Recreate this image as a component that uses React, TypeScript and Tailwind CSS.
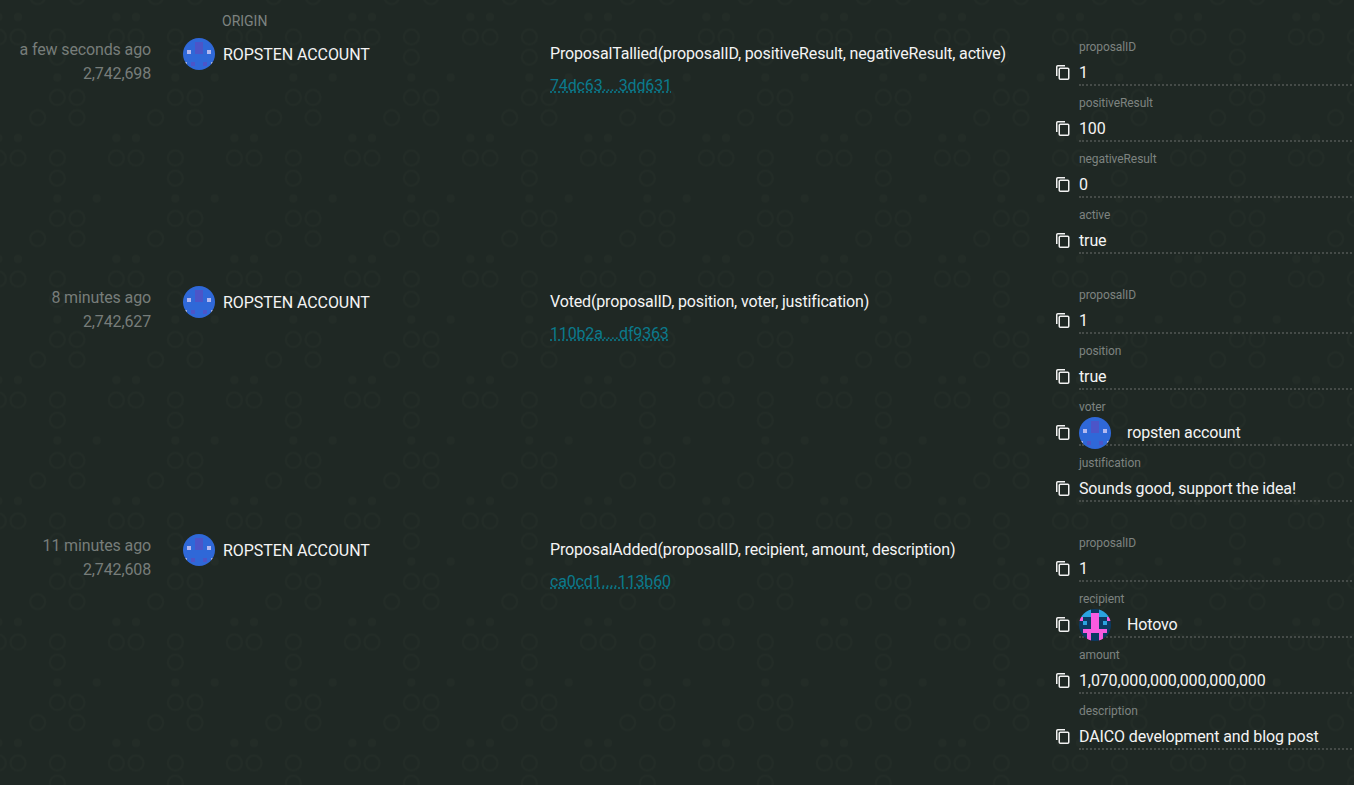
import React from "react";

const blue = [
  "aaaaaaaa",
  "aaabbaaa",
  "aaabbaaa",
  "acabbaca",
  "aaaaaaaa",
  "aaaaaaaa",
  "dabaabad",
  "aaaaaaaa",
];

const hotovo = [
  "bccbbccb",
  "cccmmccc",
  "mbbmmbbm",
  "bcbmmbcb",
  "bbbmmbbb",
  "bmmmmmmb",
  "bbmbbmbb",
  "bbmbbmbb",
];

const colors: Record<string, string> = {
  a: "#2f68d8",
  b: "#4c55c8",
  c: "#b3b8f0",
  d: "#9fb0ea",
};

const hotovoColors: Record<string, string> = {
  c: "#2aa3e0",
  m: "#f95be0",
  b: "#0c3a63",
};

function Blocky({ rows, palette }: { rows: string[]; palette: Record<string, string> }) {
  return (
    <div className="w-8 h-8 rounded-full overflow-hidden shrink-0">
      <svg width="32" height="32" viewBox="0 0 8 8" shapeRendering="crispEdges" className="block">
        {rows.map((row, y) =>
          row.split("").map((c, x) => (
            <rect key={`${x}-${y}`} x={x} y={y} width="1" height="1" fill={palette[c]} />
          ))
        )}
      </svg>
    </div>
  );
}

function CopyIcon() {
  return (
    <svg width="14" height="15" viewBox="0 0 14 15" fill="none" stroke="#f2f2f2" strokeWidth="1.5" className="block">
      <path d="M0.75 11V1.8C0.75 1.2 1.2 0.75 1.8 0.75H9" />
      <rect x="3.25" y="3.25" width="9.5" height="11" rx="1" />
    </svg>
  );
}

type Param = { label: string; value: string; avatar?: "blue" | "hotovo" };

type EventRow = {
  time: string;
  block: string;
  name: string;
  hash: string;
  params: Param[];
};

const events: EventRow[] = [
  {
    time: "a few seconds ago",
    block: "2,742,698",
    name: "ProposalTallied(proposalID, positiveResult, negativeResult, active)",
    hash: "74dc63....3dd631",
    params: [
      { label: "proposalID", value: "1" },
      { label: "positiveResult", value: "100" },
      { label: "negativeResult", value: "0" },
      { label: "active", value: "true" },
    ],
  },
  {
    time: "8 minutes ago",
    block: "2,742,627",
    name: "Voted(proposalID, position, voter, justification)",
    hash: "110b2a....df9363",
    params: [
      { label: "proposalID", value: "1" },
      { label: "position", value: "true" },
      { label: "voter", value: "ropsten account", avatar: "blue" },
      { label: "justification", value: "Sounds good, support the idea!" },
    ],
  },
  {
    time: "11 minutes ago",
    block: "2,742,608",
    name: "ProposalAdded(proposalID, recipient, amount, description)",
    hash: "ca0cd1....113b60",
    params: [
      { label: "proposalID", value: "1" },
      { label: "recipient", value: "Hotovo", avatar: "hotovo" },
      { label: "amount", value: "1,070,000,000,000,000,000" },
      { label: "description", value: "DAICO development and blog post" },
    ],
  },
];

// background tile, as [column, row]
const rings: [number, number][] = [
  [1, 0], [3, 0], [0, 2], [2, 2], [5, 2], [2, 3], [2, 5], [3, 5],
];
const dots: [number, number][] = [
  [0, 1], [5, 1], [2, 4], [4, 4],
];

function Pattern() {
  return (
    <svg className="absolute inset-0 w-full h-full" aria-hidden="true">
      <defs>
        <pattern id="tile" x="8" y="-13.3" width="118" height="121" patternUnits="userSpaceOnUse">
          {rings.map(([c, r]) => (
            <circle key={`r${c}${r}`} cx={10 + c * 19.67} cy={10 + r * 20.17} r="7.5" fill="none" stroke="#232c27" strokeWidth="2" />
          ))}
          {dots.map(([c, r]) => (
            <circle key={`d${c}${r}`} cx={10 + c * 19.67} cy={10 + r * 20.17} r="4" fill="#232c27" />
          ))}
        </pattern>
      </defs>
      <rect width="100%" height="100%" fill="url(#tile)" />
    </svg>
  );
}

function ParamRow({ param }: { param: Param }) {
  return (
    <div className="h-14 pl-[23px] relative">
      <div className="text-xs leading-[14px] pt-2 text-[#7d8380] tracking-[-0.08px]">{param.label}</div>
      <div className="absolute left-0 top-[33px]">
        <CopyIcon />
      </div>
      <div className="h-[32px] pt-[8px] flex items-center border-b-2 border-dotted border-[#454b48] text-base leading-6 text-[#f4f4f4] tracking-[-0.13px]">
        {param.avatar && (
          <div className="mr-4">
            <Blocky rows={param.avatar === "blue" ? blue : hotovo} palette={param.avatar === "blue" ? colors : hotovoColors} />
          </div>
        )}
        <span>{param.value}</span>
      </div>
    </div>
  );
}

export default function App() {
  return (
    <div className="relative w-[1354px] h-[785px] overflow-hidden bg-[#1f2824] font-['Roboto',sans-serif]">
      <Pattern />
      <div className="relative">
        <div className="h-[32px] pl-[222px] pt-[13px] text-sm leading-4 text-[#7d8380]">ORIGIN</div>
        {events.map((ev) => (
          <div key={ev.hash} className="flex h-[248px]">
            <div className="w-[151px] shrink-0 text-right text-base text-[#777d7a] leading-6 pt-1.5 tracking-[-0.13px]">
              <div>{ev.time}</div>
              <div>{ev.block}</div>
            </div>
            <div className="w-[399px] shrink-0 pl-[32px] pt-1.5 flex items-start">
              <Blocky rows={blue} palette={colors} />
              <div className="ml-2 text-base text-[#f4f4f4] leading-[34px] tracking-[-0.07px]">ROPSTEN ACCOUNT</div>
            </div>
            <div className="w-[506px] shrink-0 pt-[10px] tracking-[-0.15px]">
              <div className="text-base leading-6 text-[#f4f4f4]">{ev.name}</div>
              <div className="mt-2">
                <a className="text-base leading-6 text-[#0b7a8c] underline decoration-dotted [text-decoration-skip-ink:none]">{ev.hash}</a>
              </div>
            </div>
            <div className="w-[296px] shrink-0">
              {ev.params.map((p) => (
                <ParamRow key={p.label} param={p} />
              ))}
            </div>
          </div>
        ))}
      </div>
    </div>
  );
}
